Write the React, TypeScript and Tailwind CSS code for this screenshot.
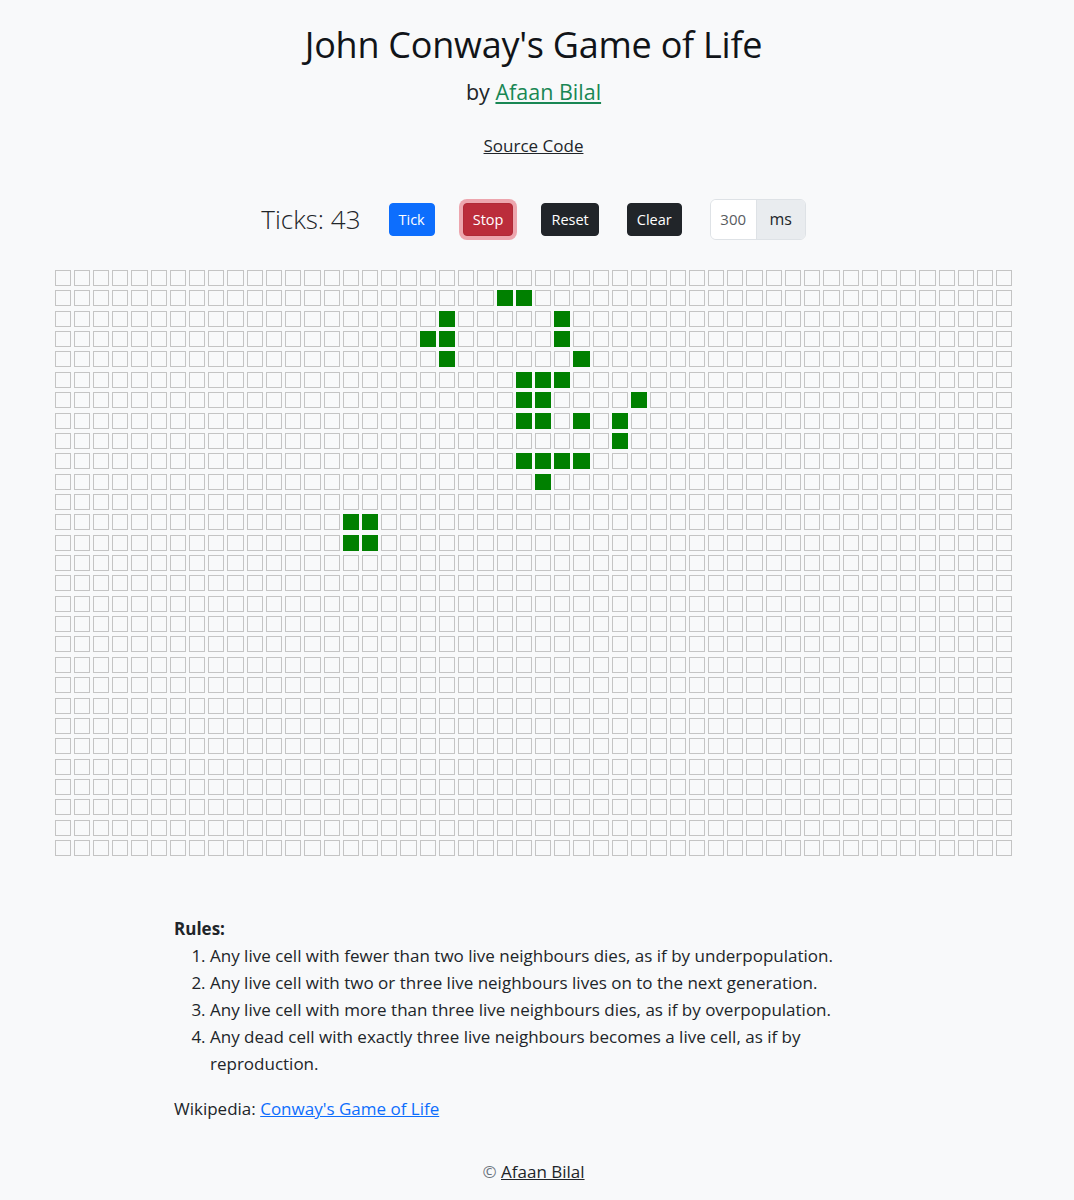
import React from "react";

const LIVE: Record<number, number[]> = {
  1: [23, 24],
  2: [20, 26],
  3: [19, 20, 26],
  4: [20, 27],
  5: [24, 25, 26],
  6: [24, 25, 30],
  7: [24, 25, 27, 29],
  8: [29],
  9: [24, 25, 26, 27],
  10: [25],
  12: [15, 16],
  13: [15, 16],
};

const ROWS = 29;
const COLS = 50;

function Grid() {
  const cells: React.ReactNode[] = [];
  for (let r = 0; r < ROWS; r++) {
    for (let c = 0; c < COLS; c++) {
      const alive = (LIVE[r] || []).includes(c);
      cells.push(
        <div
          key={`${r}-${c}`}
          className={
            alive
              ? "bg-[#008000] border border-[#008000]"
              : "bg-[#f8f9fa] border border-[#c4c4c4]"
          }
        />
      );
    }
  }
  return (
    <div className="w-[958px] grid grid-cols-[repeat(50,minmax(0,1fr))] auto-rows-[16px] gap-x-[3px] gap-y-[4.36px]">
      {cells}
    </div>
  );
}

export default function App() {
  return (
    <div className="min-h-[1200px] bg-[#f8f9fa]">
      <div
        className="w-[1067px] text-[#212529] flex flex-col items-center pt-[23px]"
        style={{ fontFamily: '"Open Sans", "Noto Sans", sans-serif' }}
      >
        <h1 className="text-[36px] leading-[1.2] font-medium tracking-[-0.25px] text-[#111418]">
          John Conway's Game of Life
        </h1>
        <div className="mt-[13px] text-[21.5px] leading-[1.2] text-[#212529]">
          by{" "}
          <a href="#" className="text-[#198754] underline">
            Afaan Bilal
          </a>
        </div>
        <a href="#" className="mt-[29px] text-[17px] leading-[24px] underline text-[#212529]">
          Source Code
        </a>

        <div className="mt-[41px] flex items-center gap-[28px] h-[41px]">
          <span className="text-[26px] font-light leading-none">Ticks: 43</span>
          <button className="h-[33px] px-[9px] rounded-[4px] bg-[#0d6efd] text-white text-[14.5px] border border-[#0d6efd]">
            Tick
          </button>
          <button className="h-[33px] px-[9px] rounded-[4px] bg-[#bb2d3b] text-white text-[14.5px] border border-[#b02a37] ring-4 ring-[#e1536180]">
            Stop
          </button>
          <button className="h-[33px] px-[9px] rounded-[4px] bg-[#212529] text-white text-[14.5px] border border-[#212529]">
            Reset
          </button>
          <button className="h-[33px] px-[9px] rounded-[4px] bg-[#212529] text-white text-[14.5px] border border-[#212529]">
            Clear
          </button>
          <div className="flex h-[41px] rounded-[6px] border border-[#dee2e6] overflow-hidden">
            <div className="w-[46px] bg-white flex items-center justify-center text-[15px] text-[#595c5f] border-r border-[#dee2e6]">
              300
            </div>
            <div className="w-[48px] bg-[#e9ecef] flex items-center justify-center text-[16px] text-[#212529]">
              ms
            </div>
          </div>
        </div>

        <div className="mt-[30px]">
          <Grid />
        </div>

        <div className="w-[719px] mt-[59px] text-[17px] leading-[27px]">
          <div className="font-bold">Rules:</div>
          <ol className="list-decimal pl-[36px]">
            <li>Any live cell with fewer than two live neighbours dies, as if by underpopulation.</li>
            <li>Any live cell with two or three live neighbours lives on to the next generation.</li>
            <li>Any live cell with more than three live neighbours dies, as if by overpopulation.</li>
            <li>Any dead cell with exactly three live neighbours becomes a live cell, as if by reproduction.</li>
          </ol>
          <p className="mt-[18px]">
            Wikipedia:{" "}
            <a href="#" className="text-[#0d6efd] underline">
              Conway's Game of Life
            </a>
          </p>
        </div>

        <div className="mt-[36px] text-[17px] leading-[27px]">
          <span className="text-[#6c757d]">© </span>
          <a href="#" className="underline text-[#212529]">
            Afaan Bilal
          </a>
        </div>
      </div>
    </div>
  );
}
